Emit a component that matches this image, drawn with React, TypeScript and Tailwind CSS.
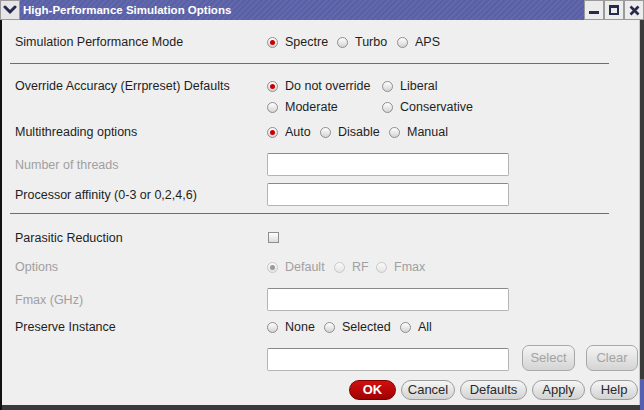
import React from 'react';

type Opt = { label: string; w?: number; checked?: boolean };

const Radio: React.FC<{ checked?: boolean; disabled?: boolean }> = ({ checked, disabled }) => (
  <span
    className={`relative inline-block w-[11px] h-[11px] rounded-full border shrink-0 ${
      disabled
        ? 'border-[#c8c8c8] bg-[linear-gradient(#fafafa,#e4e4e4)]'
        : 'border-[#8e8e8e] bg-[linear-gradient(#ffffff,#d4d4d4)]'
    }`}
  >
    {checked && (
      <span
        className={`absolute left-[2px] top-[2px] w-[5px] h-[5px] rounded-full ${
          disabled ? 'bg-[#9a9a9a]' : 'bg-[#c80000]'
        }`}
      />
    )}
  </span>
);

// each option gets the column width it has in the dialog
const RadioGroup: React.FC<{ options: Opt[]; disabled?: boolean }> = ({ options, disabled }) => (
  <div className="flex items-center pt-[2px]">
    {options.map(o => (
      <div key={o.label} className="flex items-center gap-[7px] shrink-0" style={{ width: o.w }}>
        <Radio checked={o.checked} disabled={disabled} />
        <span className={disabled ? 'text-[#a0a0a0]' : 'text-[#1e1e1e]'}>{o.label}</span>
      </div>
    ))}
  </div>
);

const Row: React.FC<{ label?: string; dim?: boolean; h: number; mt: number; children?: React.ReactNode }> = ({
  label,
  dim,
  h,
  mt,
  children
}) => (
  <div className="flex items-center" style={{ height: h, marginTop: mt }}>
    <div className={`w-[265px] pl-[13px] pt-[2px] shrink-0 ${dim ? 'text-[#a0a0a0]' : 'text-[#1e1e1e]'}`}>{label}</div>
    <div className="flex-1 h-full flex items-center">{children}</div>
  </div>
);

const Field = () => (
  <div className="w-[242px] h-[23px] bg-white border border-[#b4b4b4] border-t-[#8a8a8a] rounded-[2px]" />
);

const Btn: React.FC<{ label: string; w: number; primary?: boolean }> = ({ label, w, primary }) => (
  <div
    className={`h-[20px] rounded-full flex items-center justify-center border text-[13px] ${
      primary
        ? 'bg-[linear-gradient(#d21010,#a00000)] border-[#7a0000] text-white font-bold'
        : 'bg-[linear-gradient(#f6f6f6,#d2d2d2)] border-[#9c9c9c] text-[#2a2a2a]'
    }`}
    style={{ width: w }}
  >
    {label}
  </div>
);

const Separator = () => <div className="ml-[8px] h-px bg-[#6e6e6e] w-[599px]" />;

export default function App() {
  return (
    <div className="w-[644px] h-[410px] bg-[#3a3a3a] font-['Liberation_Sans',Arial,sans-serif] text-[12.5px] overflow-hidden">
      {/* title bar */}
      <div className="flex h-[20px] bg-[repeating-linear-gradient(135deg,#5960a4_0px,#5960a4_2px,#6168ae_2px,#6168ae_4px)]">
        <div className="w-[20px] h-[20px] bg-[#e6e6e6] border border-[#9a9a9a] flex items-center justify-center">
          <svg width="14" height="10" viewBox="0 0 14 10">
            <path d="M2 2 L7 7 L12 2" stroke="#262a4e" strokeWidth="3" fill="none" strokeLinecap="round" />
          </svg>
        </div>
        <div className="pl-[3px] flex-1 text-white font-bold text-[11.5px] leading-[20px]">
          High-Performance Simulation Options
        </div>
        <div className="flex">
          <div className="w-[20px] h-[20px] bg-[#ececec] border border-[#9a9a9a] flex items-center justify-center">
            <div className="w-[10px] h-[3px] bg-[#262a4e] mt-[5px]" />
          </div>
          <div className="w-[20px] h-[20px] bg-[#ececec] border border-[#9a9a9a] flex items-center justify-center">
            <div className="w-[10px] h-[10px] border-2 border-[#262a4e] border-t-[3px]" />
          </div>
          <div className="w-[20px] h-[20px] bg-[#ececec] border border-[#9a9a9a] flex items-center justify-center">
            <svg width="11" height="11" viewBox="0 0 11 11">
              <path d="M1.5 1.5 L9.5 9.5 M9.5 1.5 L1.5 9.5" stroke="#262a4e" strokeWidth="2.6" />
            </svg>
          </div>
        </div>
      </div>

      {/* body */}
      <div className="flex h-[390px]">
        <div className="w-[2px] bg-[#111]" />
        <div className="w-[638px] h-[385px] bg-[#efefef] border-r border-[#c8c8c8] flex flex-col">
          <Row label="Simulation Performance Mode" h={43} mt={0}>
            <RadioGroup
              options={[
                { label: 'Spectre', w: 70, checked: true },
                { label: 'Turbo', w: 60 },
                { label: 'APS' }
              ]}
            />
          </Row>
          <Separator />

          <Row label="Override Accuracy (Errpreset) Defaults" h={22} mt={10}>
            <RadioGroup
              options={[
                { label: 'Do not override', w: 115, checked: true },
                { label: 'Liberal' }
              ]}
            />
          </Row>
          <Row h={21} mt={0}>
            <RadioGroup
              options={[
                { label: 'Moderate', w: 115 },
                { label: 'Conservative' }
              ]}
            />
          </Row>
          <Row label="Multithreading options" h={22} mt={3}>
            <RadioGroup
              options={[
                { label: 'Auto', w: 53, checked: true },
                { label: 'Disable', w: 69 },
                { label: 'Manual' }
              ]}
            />
          </Row>
          <Row label="Number of threads" dim h={23} mt={11}>
            <Field />
          </Row>
          <Row label="Processor affinity (0-3 or 0,2,4,6)" h={23} mt={7}>
            <Field />
          </Row>
          <div className="mt-[7px]">
            <Separator />
          </div>

          <Row label="Parasitic Reduction" h={22} mt={12}>
            <span className="ml-[1px] w-[11px] h-[11px] border border-[#8e8e8e] bg-[linear-gradient(#ffffff,#dcdcdc)]" />
          </Row>
          <Row label="Options" dim h={22} mt={7}>
            <RadioGroup
              disabled
              options={[
                { label: 'Default', w: 67, checked: true },
                { label: 'RF', w: 42 },
                { label: 'Fmax' }
              ]}
            />
          </Row>
          <Row label="Fmax (GHz)" dim h={23} mt={11}>
            <Field />
          </Row>
          <Row label="Preserve Instance" h={22} mt={4}>
            <RadioGroup
              options={[
                { label: 'None', w: 57 },
                { label: 'Selected', w: 76 },
                { label: 'All' }
              ]}
            />
          </Row>
          <div className="flex items-end h-[27px] mt-[7px] pl-[265px]">
            <Field />
            <div className="ml-[13px] w-[53px] h-[26px] rounded-[7px] border border-[#a8a8a8] bg-[linear-gradient(#f4f4f4,#d4d4d4)] text-[#a4a4a4] text-[13px] flex items-center justify-center">
              Select
            </div>
            <div className="ml-[11px] w-[52px] h-[26px] rounded-[7px] border border-[#a8a8a8] bg-[linear-gradient(#f4f4f4,#d4d4d4)] text-[#a4a4a4] text-[13px] flex items-center justify-center">
              Clear
            </div>
          </div>
          <div className="flex justify-end gap-[5px] mt-[9px] pr-[1px]">
            <Btn label="OK" w={47} primary />
            <Btn label="Cancel" w={54} />
            <Btn label="Defaults" w={67} />
            <Btn label="Apply" w={53} />
            <Btn label="Help" w={48} />
          </div>
        </div>
        <div className="w-[4px] bg-[linear-gradient(#3a3a3a_0%,#3a3a3a_92%,#5560b0_92%)]" />
      </div>
    </div>
  );
}
